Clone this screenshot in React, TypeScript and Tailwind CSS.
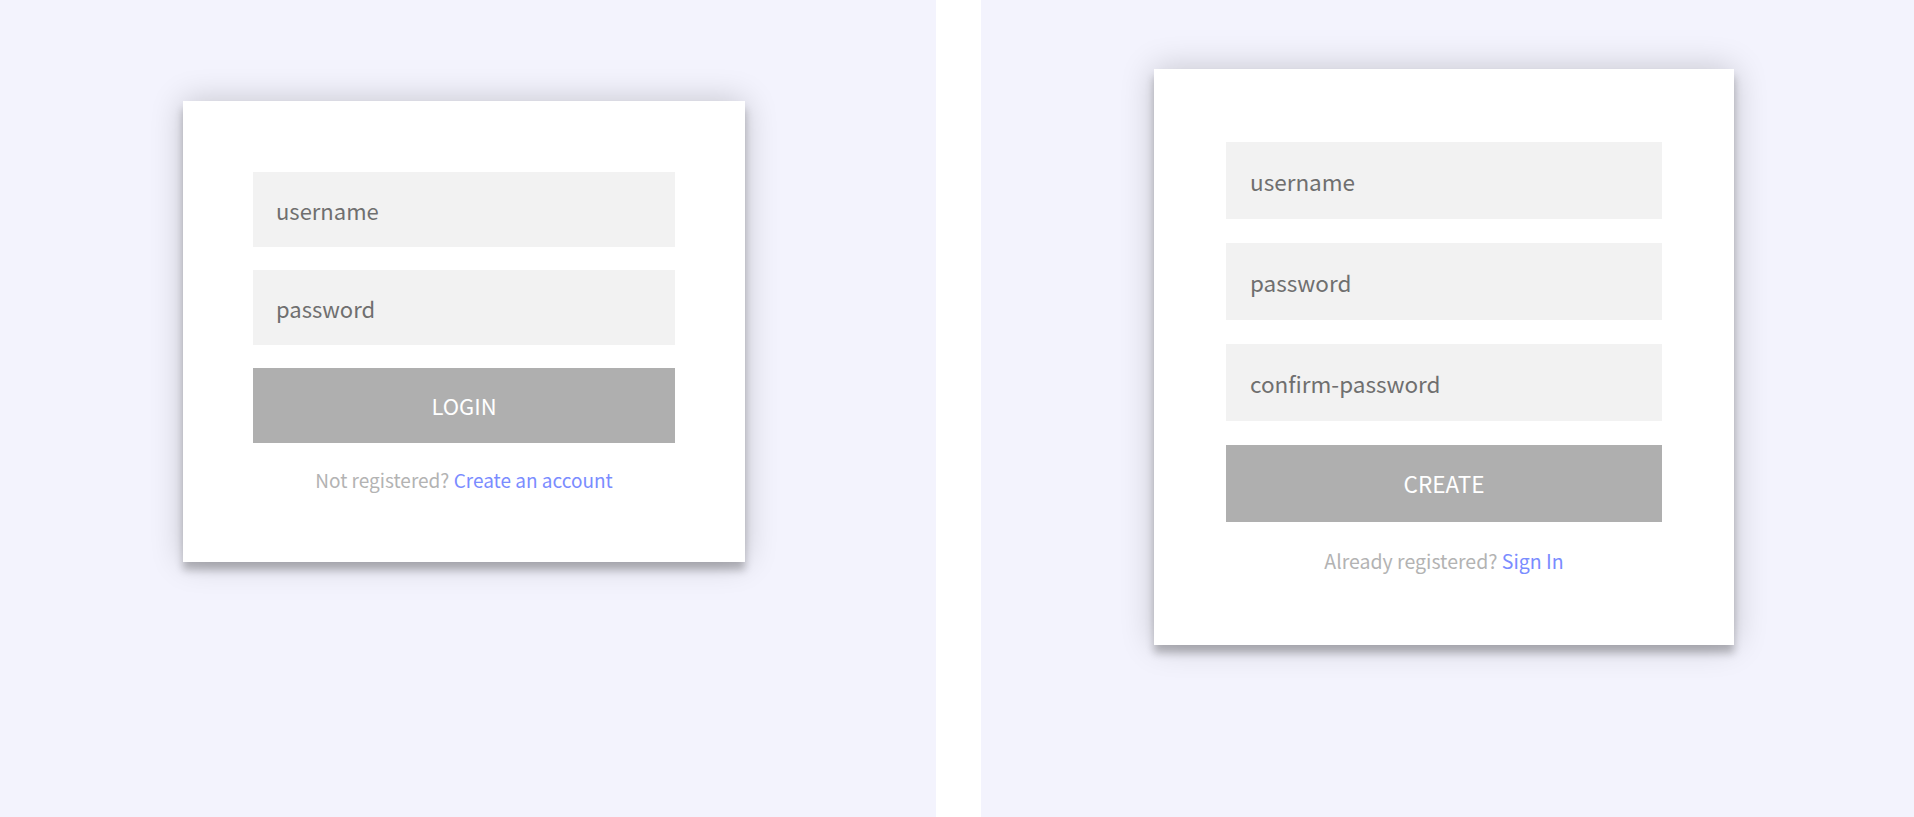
import React from "react";

const font = { fontFamily: '"Noto Sans CJK KR", "Noto Sans", sans-serif' };

const LoginCard = () => (
  <form
    className="ml-[183px] mt-[101px] w-[562px] bg-white px-[70px] pb-[68px] pt-[71px] text-center shadow-[0_0_31px_rgba(0,0,0,0.2),0_8px_8px_rgba(0,0,0,0.24)]"
    onSubmit={(e) => e.preventDefault()}
  >
    <input
      type="text"
      placeholder="username"
      className="mb-[23px] block h-[75px] w-full bg-[#f2f2f2] px-[23px] text-[22px] text-[#6f6f6f] outline-none placeholder:text-[#6f6f6f]"
    />
    <input
      type="password"
      placeholder="password"
      className="mb-[23px] block h-[75px] w-full bg-[#f2f2f2] px-[23px] text-[22px] text-[#6f6f6f] outline-none placeholder:text-[#6f6f6f]"
    />
    <button className="block h-[75px] w-full bg-[#afafaf] text-[22px] uppercase text-white">login</button>
    <p className="mt-[23px] text-[19px] leading-[28px] text-[#b3b3b3]">
      Not registered? <a href="#" className="text-[#7a8cff]">Create an account</a>
    </p>
  </form>
);

const RegisterCard = () => (
  <form
    className="ml-[173px] mt-[69px] w-[580px] bg-white px-[72px] pb-[69px] pt-[73px] text-center shadow-[0_0_32px_rgba(0,0,0,0.2),0_8px_8px_rgba(0,0,0,0.24)]"
    onSubmit={(e) => e.preventDefault()}
  >
    {["username", "password", "confirm-password"].map((p) => (
      <input
        key={p}
        type={p === "username" ? "text" : "password"}
        placeholder={p}
        className="mb-[24px] block h-[77px] w-full bg-[#f2f2f2] px-[24px] text-[22.5px] text-[#6f6f6f] outline-none placeholder:text-[#6f6f6f]"
      />
    ))}
    <button className="block h-[77px] w-full bg-[#afafaf] text-[22.5px] uppercase text-white">create</button>
    <p className="mt-[24px] text-[19.5px] leading-[30px] text-[#b3b3b3]">
      Already registered? <a href="#" className="text-[#7a8cff]">Sign In</a>
    </p>
  </form>
);

export default function App() {
  return (
    <div className="flex h-[817px] w-full bg-white" style={font}>
      <div className="h-full w-[936px] shrink-0 overflow-hidden bg-[#f3f3fd]">
        <LoginCard />
      </div>
      <div className="ml-[45px] h-full flex-1 overflow-hidden bg-[#f3f3fd]">
        <RegisterCard />
      </div>
    </div>
  );
}
